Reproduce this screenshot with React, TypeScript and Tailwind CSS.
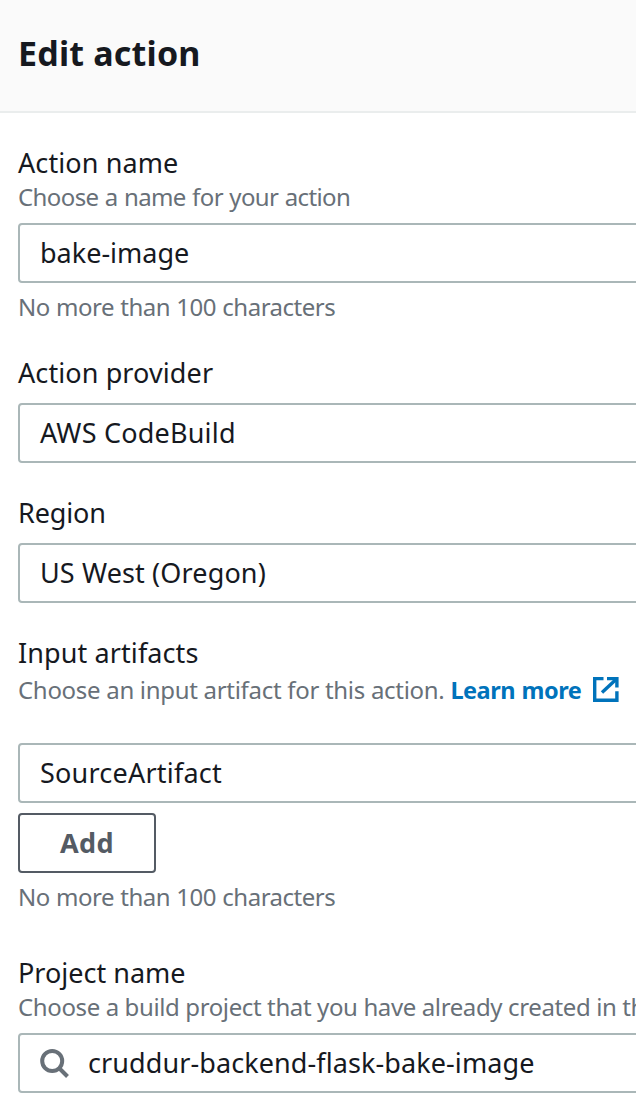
import type { ReactNode } from 'react';

function Label({ className, children }: { className: string; children: ReactNode }) {
  return (
    <div className="flex">
      <h2 className={`text-[27px] leading-9 font-normal text-[#16191f] ${className}`}>{children}</h2>
    </div>
  );
}

function Hint({ className, children }: { className: string; children: ReactNode }) {
  return (
    <div className="flex">
      <p className={`text-[24px] leading-8 text-[#687078] ${className}`}>{children}</p>
    </div>
  );
}

function Field({ className, children }: { className: string; children: ReactNode }) {
  return (
    <div className={`flex h-[60px] items-center rounded-[4px] border-2 border-[#aab7b8] bg-white pl-5 text-[27px] text-[#16191f] ${className}`}>
      {children}
    </div>
  );
}

export default function App() {
  return (
    <div className="h-[1116px] w-[636px] overflow-hidden bg-white font-['Noto_Sans',sans-serif] whitespace-nowrap">
      <header className="flex h-[113px] border-b-2 border-[#eaeded] bg-[#fafafa] pt-[30px] pl-[18px]">
        <h1 className="text-[34px] leading-[46px] font-bold tracking-[0.2px] text-[#16191f]">Edit action</h1>
      </header>
      <main className="w-[680px] pt-8 pl-[18px]">
        <section>
          <Label className="tracking-[0.1px]">Action name</Label>
          <Hint className="tracking-[-0.59px] [word-spacing:0.6px]">Choose a name for your action</Hint>
          <Field className="mt-2.5"><span>bake-image</span></Field>
          <div className="mt-2"><Hint className="tracking-[-0.49px] [word-spacing:0.5px]">No more than 100 characters</Hint></div>
        </section>
        <section className="mt-8">
          <Label className="tracking-[0.1px]">Action provider</Label>
          <Field className="mt-3"><span className="tracking-[0.2px]">AWS CodeBuild</span></Field>
        </section>
        <section className="mt-8">
          <Label className="tracking-[-0.15px]">Region</Label>
          <Field className="mt-3"><span className="tracking-[0.13px]">US West (Oregon)</span></Field>
        </section>
        <section className="mt-8">
          <Label className="tracking-[0.1px]">Input artifacts</Label>
          <div className="mt-[3px] flex items-center">
            <Hint className="tracking-[-0.3px]">Choose an input artifact for this action.</Hint>
            <a className="ml-1.5 text-[23.5px] leading-8 font-bold tracking-[-0.5px] text-[#0073bb] [word-spacing:1px]">Learn more</a>
            <svg className="ml-3 h-[26px] w-[26px]" viewBox="0 0 26 26" fill="none" stroke="#0073bb" strokeWidth="3.4">
              <path d="M10.5 1.5H1.7v21.7h22.2v-9M14 1.5h9.9v9" />
              <path d="M23.5 2 9 15.6" />
            </svg>
          </div>
          <Field className="mt-[37px]"><span className="tracking-[0.22px]">SourceArtifact</span></Field>
          <button className="mt-2.5 flex h-[60px] w-[138px] items-center justify-center rounded-[4px] border-2 border-[#545b64] text-[27px] font-bold text-[#545b64]">
            <span className="tracking-[0.4px]">Add</span>
          </button>
          <div className="mt-2"><Hint className="tracking-[-0.49px] [word-spacing:0.5px]">No more than 100 characters</Hint></div>
        </section>
        <section className="mt-[42px]">
          <Label className="">Project name</Label>
          <Hint className="tracking-[-0.38px]">Choose a build project that you have already created in the</Hint>
          <Field className="mt-2.5">
            <svg className="mr-[18px] h-[30px] w-[30px]" viewBox="0 0 30 30" fill="none" stroke="#687078" strokeWidth="4">
              <circle cx="12.2" cy="13" r="10" />
              <path d="m19 20 8.5 8.5" />
            </svg>
            <span className="tracking-[0.09px]">cruddur-backend-flask-bake-image</span>
          </Field>
        </section>
      </main>
    </div>
  );
}
